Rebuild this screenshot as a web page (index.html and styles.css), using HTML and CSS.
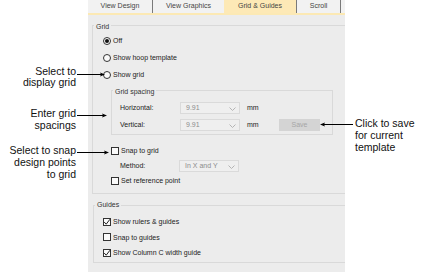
FILE: index.html
```html
<!DOCTYPE html>
<html lang="en">
<head>
    <meta charset="UTF-8">
    <title>Grid &amp; Guides</title>
    <link rel="stylesheet" href="styles.css">
</head>
<body>
    <div class="stage">
        <div class="panel">
            <div class="tabs">
                <div class="tab tab-design">View Design</div>
                <div class="tab tab-graphics">View Graphics</div>
                <div class="tab tab-grid active">Grid &amp; Guides</div>
                <div class="tab tab-scroll">Scroll</div>
            </div>
            <div class="body">
                <fieldset class="group grid-group">
                    <legend>Grid</legend>
                    <div class="rows grid-rows">
                        <div class="opt"><span class="radio on"></span>Off</div>
                        <div class="opt"><span class="radio"></span>Show hoop template</div>
                        <div class="opt"><span class="radio"></span>Show grid</div>

                        <fieldset class="group spacing-group">
                            <legend>Grid spacing</legend>
                            <div class="rows spacing-rows">
                                <div class="field">
                                    <span class="lbl">Horizontal:</span>
                                    <span class="combo">9.91<svg class="chev" width="7" height="4" viewBox="0 0 7 4"><polyline points="0.5,0.5 3.5,3.5 6.5,0.5" fill="none" stroke="#b4b4b4" stroke-width="1"/></svg></span>
                                    <span class="unit">mm</span>
                                </div>
                                <div class="field">
                                    <span class="lbl">Vertical:</span>
                                    <span class="combo">9.91<svg class="chev" width="7" height="4" viewBox="0 0 7 4"><polyline points="0.5,0.5 3.5,3.5 6.5,0.5" fill="none" stroke="#b4b4b4" stroke-width="1"/></svg></span>
                                    <span class="unit">mm</span>
                                    <span class="btn">Save</span>
                                </div>
                            </div>
                        </fieldset>

                        <div class="opt sub snap"><span class="check"></span>Snap to grid</div>
                        <div class="field method">
                            <span class="lbl">Method:</span>
                            <span class="combo">In X and Y<svg class="chev" width="7" height="4" viewBox="0 0 7 4"><polyline points="0.5,0.5 3.5,3.5 6.5,0.5" fill="none" stroke="#b4b4b4" stroke-width="1"/></svg></span>
                        </div>
                        <div class="opt sub"><span class="check"></span>Set reference point</div>
                    </div>
                </fieldset>

                <fieldset class="group guides-group">
                    <legend>Guides</legend>
                    <div class="rows guides-rows">
                        <div class="opt g1"><span class="check on"><svg width="8" height="8" viewBox="0 0 8 8"><polyline points="1.2,4 3.2,6.2 7,1.2" fill="none" stroke="#222" stroke-width="1"/></svg></span>Show rulers &amp; guides</div>
                        <div class="opt g2"><span class="check"></span>Snap to guides</div>
                        <div class="opt g3"><span class="check on"><svg width="8" height="8" viewBox="0 0 8 8"><polyline points="1.2,4 3.2,6.2 7,1.2" fill="none" stroke="#222" stroke-width="1"/></svg></span>Show Column C width guide</div>
                    </div>
                </fieldset>
            </div>
        </div>

        <!-- callouts -->
        <div class="note note-grid">
            <div class="note-text">Select to<br>display grid</div>
            <svg class="arrow" width="28" height="12" viewBox="0 0 28 12"><line x1="0" y1="8.5" x2="24" y2="8.5" stroke="#000" stroke-width="1"/><polygon points="28,8.5 23,6.5 24,8.5 23,10.5" fill="#000"/></svg>
        </div>
        <div class="note note-spacing">
            <div class="note-text">Enter grid<br>spacings</div>
            <svg class="arrow" width="30" height="12" viewBox="0 0 30 12"><line x1="0" y1="8.5" x2="26" y2="8.5" stroke="#000" stroke-width="1"/><polygon points="30,8.5 25,6.5 26,8.5 25,10.5" fill="#000"/></svg>
        </div>
        <div class="note note-snap">
            <div class="note-text">Select to snap<br>design points<br>to grid</div>
            <svg class="arrow" width="32" height="12" viewBox="0 0 32 12"><line x1="0" y1="8.5" x2="28" y2="8.5" stroke="#000" stroke-width="1"/><polygon points="32,8.5 27,6.5 28,8.5 27,10.5" fill="#000"/></svg>
        </div>
        <div class="note note-save">
            <svg class="arrow" width="33" height="12" viewBox="0 0 33 12"><line x1="4" y1="7.5" x2="33" y2="7.5" stroke="#000" stroke-width="1"/><polygon points="0,7.5 5,5.5 4,7.5 5,9.5" fill="#000"/></svg>
            <div class="note-text">Click to save<br>for current<br>template</div>
        </div>
    </div>
</body>
</html>
```

FILE: styles.css
```css
* {
    padding: 0;
    margin: 0;
    box-sizing: border-box;
}
body {
    background: #fff;
    font-family: "Liberation Sans", Arial, sans-serif;
}
.stage {
    position: relative;
    width: 438px;
    height: 276px;
}

/* dialog panel */
.panel {
    margin-left: 88px;
    width: 257px;
    height: 272px;
    background: #ececec;
    overflow: hidden;
    font-size: 7px;
    color: #222;
}
.tabs {
    display: flex;
    height: 15px;
    background: #f2f2f2;
    border-bottom: 2px solid #fce9b4;
}
.tab {
    height: 13px;
    line-height: 12px;
    text-align: center;
    color: #444;
}
.tab-design {
    width: 65px;
    border-right: 1px solid #7a7a7a;
}
.tab-graphics {
    width: 71px;
}
.tab-grid {
    width: 73px;
    border-right: 1px solid #7a7a7a;
}
.tab-scroll {
    width: 44px;
    border-right: 1px solid #7a7a7a;
}
.tab.active {
    background: #fde9b6;
}

/* group boxes */
.group {
    border: 1px solid #d9d9d9;
    min-width: 0;
}
.group legend {
    font-size: 7px;
    line-height: 8px;
    padding: 0 2px;
    margin-left: 1px;
    color: #333;
}
.grid-group legend {
    position: relative;
    top: 2px;
}
.grid-group {
    margin: 6px 0 0 4px;
    width: 270px;
}
.grid-rows {
    padding: 3px 0 5px 10px;
}
.spacing-group {
    margin: 3px 0 0 8px;
    width: 222px;
}
.spacing-rows {
    padding: 5px 0 1px 8px;
}
.guides-group {
    margin: 7px 0 0 5px;
    width: 270px;
}
.guides-rows {
    padding: 5px 0 2px 9px;
}

/* options */
.opt {
    display: flex;
    align-items: center;
    height: 17px;
    color: #222;
}
.opt.sub {
    margin-left: 8px;
    height: 15px;
}
.opt.snap {
    margin-top: 8px;
}
.g1, .g3 {
    height: 15px;
}
.g2 {
    height: 16px;
}
.radio {
    width: 8px;
    height: 8px;
    border: 1px solid #333;
    border-radius: 50%;
    background: #fafafa;
    margin-right: 2px;
    display: flex;
    align-items: center;
    justify-content: center;
}
.radio.on::after {
    content: "";
    width: 4px;
    height: 4px;
    border-radius: 50%;
    background: #111;
}
.check {
    width: 8px;
    height: 8px;
    border: 1px solid #333;
    background: #fafafa;
    margin-right: 2px;
    position: relative;
}
.check svg {
    position: absolute;
    left: -1px;
    top: -1px;
}

/* fields */
.field {
    display: flex;
    align-items: center;
    height: 17px;
}
.field.method {
    height: 15px;
    padding-left: 17px;
}
.lbl {
    width: 60px;
}
.method .lbl {
    width: 59px;
}
.combo {
    position: relative;
    width: 60px;
    height: 12px;
    line-height: 10px;
    padding-left: 5px;
    background: #efefef;
    border: 1px solid #dadada;
    color: #8c8c8c;
}
.chev {
    position: absolute;
    right: 3px;
    top: 4px;
}
.unit {
    width: 39px;
    padding-left: 7px;
    color: #222;
}
.btn {
    width: 41px;
    height: 12px;
    line-height: 12px;
    text-align: center;
    background: #d4d4d4;
    color: #a6a6a6;
}

/* callouts */
.note {
    position: absolute;
    display: flex;
    align-items: flex-start;
    font-size: 10.5px;
    color: #111;
}
.note-text {
    line-height: 12px;
}
.note-grid,
.note-spacing,
.note-snap {
    left: 0;
}
.note-grid .note-text,
.note-spacing .note-text,
.note-snap .note-text {
    width: 76px;
    text-align: right;
}
.note .arrow {
    margin-left: 1px;
}
.note-grid {
    top: 66px;
}
.note-grid .note-text {
    line-height: 11px;
}
.note-spacing {
    top: 107px;
}
.note-snap {
    top: 144px;
}
.note-save {
    left: 320px;
    top: 117px;
}
.note-save .arrow {
    margin: 0 2px 0 0;
}
```
